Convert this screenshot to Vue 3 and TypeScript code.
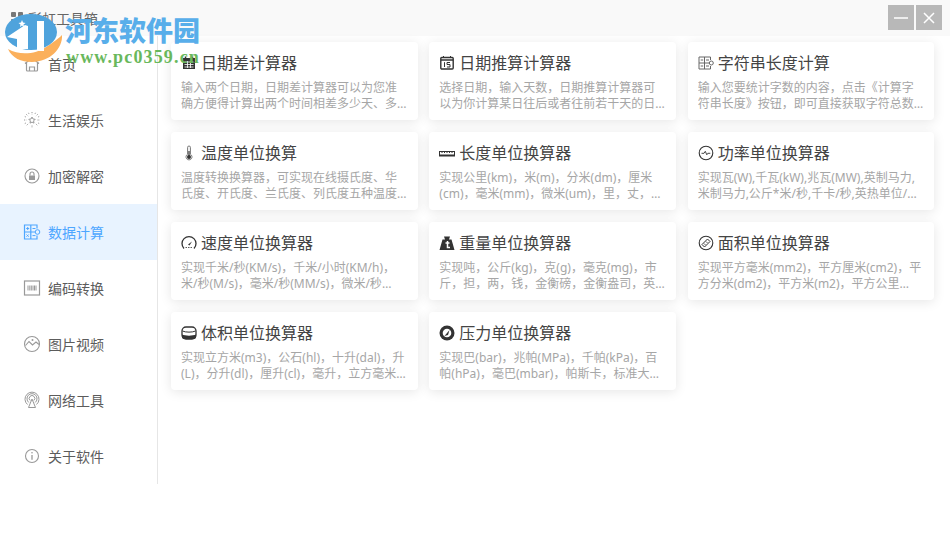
<template>
  <div class="app-window">
    <header class="title-bar">
      <div class="app-title">
        <svg class="app-logo" viewBox="0 0 12 12">
          <rect x="0" y="0" width="5" height="5" rx="1" />
          <rect x="7" y="0" width="5" height="5" rx="1" />
          <rect x="0" y="7" width="5" height="5" rx="1" />
          <rect x="7" y="7" width="5" height="5" rx="1" />
        </svg>
        <span>彩虹工具箱</span>
      </div>
      <div class="window-buttons">
        <button class="win-btn" aria-label="最小化">
          <svg viewBox="0 0 26 26"><path d="M6 13h14" /></svg>
        </button>
        <button class="win-btn" aria-label="关闭">
          <svg viewBox="0 0 26 26"><path d="M8 8l10 10M18 8L8 18" /></svg>
        </button>
      </div>
    </header>

    <div class="main">
      <nav class="sidebar">
        <div
          v-for="item in menu"
          :key="item.name"
          class="menu-item"
          :class="{ active: item.name === activeMenu }"
        >
          <svg class="menu-icon" viewBox="0 0 18 18" v-html="item.icon"></svg>
          <span>{{ item.name }}</span>
        </div>
      </nav>

      <section class="content">
        <article v-for="card in cards" :key="card.title" class="tool-card">
          <h3 class="card-title">
            <svg class="card-icon" viewBox="0 0 16 16" v-html="card.icon"></svg>
            <span>{{ card.title }}</span>
          </h3>
          <p class="card-desc">{{ card.desc }}</p>
        </article>
      </section>
    </div>

    <div class="watermark">
      <svg class="wm-logo" viewBox="0 0 66 70">
        <path d="M8 49C20 56 36 54 46 47C54 42 59 38 62 35C63 48 50 62 32 62C21 62 12 58 8 49Z" fill="#fbb05c" />
        <ellipse cx="31" cy="32" rx="26" ry="18" fill="#4fa3dc" />
        <path d="M7 37L25 25L28 26V49H17V39Z" fill="#fff" />
        <path d="M37 21H44V51H37Z" fill="#fff" />
        <path d="M22 20l1 2.500 2.500 0.500-2 1.500 0.500 2.500-2-1.500-2 1.500 0.500-2.500-2-1.500 2.500-0.500z" fill="#fff" />
      </svg>
      <div class="wm-name">河东软件园</div>
      <div class="wm-url">www.pc0359.cn</div>
    </div>
  </div>
</template>

<script setup lang="ts">
interface MenuItem {
  name: string
  icon: string
}

interface ToolCard {
  title: string
  desc: string
  icon: string
}

const activeMenu = '数据计算'

const menu: MenuItem[] = [
  {
    name: '首页',
    icon: '<path d="M2 8.500L9 3l7 5.500M3.500 7.500V15a1 1 0 0 0 1 1h9a1 1 0 0 0 1-1V7.500M6.500 16v-4h5v4" fill="none" stroke="currentColor" stroke-width="1.200"/>'
  },
  {
    name: '生活娱乐',
    icon: '<path d="M9 6l1 2 2.200.3-1.600 1.600.4 2.200-2-1-2 1 .4-2.200-1.600-1.600 2.200-.3z" fill="none" stroke="currentColor" stroke-width="1"/><path d="M9 1v2.500M9 14.500V17M1 9h2.500M14.500 9H17M3.300 3.300l1.800 1.800M12.900 12.900l1.800 1.800M14.700 3.300l-1.800 1.800M5.100 12.900l-1.800 1.800M5.500 1.800l.8 1.700M12.500 1.800l-.8 1.700M1.800 5.500l1.700.8M16.200 5.500l-1.700.8M1.800 12.500l1.700-.8M16.200 12.500l-1.700-.8" fill="none" stroke="currentColor" stroke-width="1" stroke-dasharray="1.200 1"/>'
  },
  {
    name: '加密解密',
    icon: '<circle cx="9" cy="9" r="7" fill="none" stroke="currentColor" stroke-width="1.100"/><rect x="6" y="8.500" width="6" height="4.500" fill="currentColor"/><path d="M7 8.500V7a2 2 0 0 1 4 0v1.500" fill="none" stroke="currentColor" stroke-width="1.100"/>'
  },
  {
    name: '数据计算',
    icon: '<path d="M14 5.500V2H1.500v14H14v-3.500M1.500 9h12.500M7.800 2v14" fill="none" stroke="currentColor" stroke-width="1.200"/><path d="M3.200 5.500h3M4.700 4v3M9.500 5.500h3M3.500 11.500l2.200 2.200M5.700 11.500l-2.200 2.200M9.500 12.600h3" fill="none" stroke="currentColor"/><circle cx="14.500" cy="9" r="2.300" fill="#e8f3ff" stroke="currentColor"/>'
  },
  {
    name: '编码转换',
    icon: '<rect x="1.500" y="2" width="15" height="14" fill="none" stroke="currentColor" stroke-width="1.200"/><path d="M5 6.500v5M6.800 6.500v5M8.300 6.500v5M10 6.500v5M11.500 6.500v5M13 6.500v5" stroke="currentColor" fill="none"/>'
  },
  {
    name: '图片视频',
    icon: '<circle cx="9" cy="9" r="7.500" fill="none" stroke="currentColor" stroke-width="1.100"/><path d="M2.500 10.500L6 6.500l3.500 3.500L13 7l3 2.500" fill="none" stroke="currentColor" stroke-width="1.100"/><circle cx="9.500" cy="5" r="1" fill="currentColor"/>'
  },
  {
    name: '网络工具',
    icon: '<g fill="none" stroke="currentColor" stroke-width="1"><path d="M4.500 13.500a7 7 0 1 1 9 0"/><path d="M5.800 11.500a5 5 0 1 1 6.400 0"/><path d="M7.200 9.500a2.800 2.800 0 1 1 3.600 0"/><path d="M9 8l-3.500 8.500h7z"/></g>'
  },
  {
    name: '关于软件',
    icon: '<circle cx="9" cy="9" r="6.500" fill="none" stroke="currentColor" stroke-width="1.100"/><path d="M9 8v4.800" stroke="currentColor" stroke-width="1.300"/><circle cx="9" cy="5.800" r="0.800" fill="currentColor"/>'
  }
]

const cards: ToolCard[] = [
  {
    title: '日期差计算器',
    desc: '输入两个日期，日期差计算器可以为您准确方便得计算出两个时间相差多少天、多少小时、多少分钟',
    icon: '<rect x="2" y="3" width="12" height="11" fill="currentColor"/><path d="M4.500 1.500v2M11.500 1.500v2" stroke="currentColor" stroke-width="1.500"/><path d="M3.500 7h9M3.500 9.500h9M3.500 12h9M6.500 6v7M9.500 6v7" stroke="#fff" stroke-width="0.800"/>'
  },
  {
    title: '日期推算计算器',
    desc: '选择日期，输入天数，日期推算计算器可以为你计算某日往后或者往前若干天的日期是什么时候',
    icon: '<rect x="1.800" y="2.500" width="12.400" height="11.500" rx="1" fill="none" stroke="currentColor" stroke-width="1.400"/><path d="M1.800 5h12.400" stroke="currentColor" stroke-width="1.500"/><path d="M4.500 1v2M11.500 1v2" stroke="currentColor"/><path d="M5.500 7.200v4.800M8 7.500h3M8 7.500v2h3v2.500H8" fill="none" stroke="currentColor"/>'
  },
  {
    title: '字符串长度计算',
    desc: '输入您要统计字数的内容，点击《计算字符串长度》按钮，即可直接获取字符总数和其它统计结果',
    icon: '<path d="M12.500 5V2H1v12h11.500v-3M1 8h11.500M6.500 2v12" fill="none" stroke="#666"/><path d="M2.700 5h2.500M8 5h3M2.700 11h2.500M8 11h3" stroke="#666"/><circle cx="13.300" cy="8" r="2" fill="#fff" stroke="#666"/>'
  },
  {
    title: '温度单位换算',
    desc: '温度转换换算器，可实现在线摄氏度、华氏度、开氏度、兰氏度、列氏度五种温度之间的互相转换',
    icon: '<path d="M6.500 2.500a1.500 1.500 0 0 1 3 0v6.800a3 3 0 1 1-3 0z" fill="#eee" stroke="#666" stroke-width="0.800"/><circle cx="8" cy="12" r="2" fill="currentColor"/><path d="M8 6v5" stroke="currentColor" stroke-width="1.200"/>'
  },
  {
    title: '长度单位换算器',
    desc: '实现公里(km)，米(m)，分米(dm)，厘米(cm)，毫米(mm)，微米(um)，里，丈，尺，寸，分，厘',
    icon: '<rect x="0.500" y="6.500" width="15" height="4.500" fill="none" stroke="currentColor" stroke-width="1"/><rect x="0.500" y="9.500" width="15" height="1.500" fill="currentColor"/><path d="M3 6.500v1.500M5.500 6.500v1.500M8 6.500v1.500M10.500 6.500v1.500M13 6.500v1.500" stroke="currentColor"/>'
  },
  {
    title: '功率单位换算器',
    desc: '实现瓦(W),千瓦(kW),兆瓦(MW),英制马力,米制马力,公斤*米/秒,千卡/秒,英热单位/秒,尔格/秒',
    icon: '<circle cx="8" cy="8" r="6.800" fill="none" stroke="currentColor" stroke-width="1.100"/><path d="M3.500 8.300h2.500l1.300-2 1.500 3.500 1-1.500h2.500" fill="none" stroke="currentColor" stroke-width="0.900"/>'
  },
  {
    title: '速度单位换算器',
    desc: '实现千米/秒(KM/s)，千米/小时(KM/h)，米/秒(M/s)，毫米/秒(MM/s)，微米/秒(um/s)，英里/小时',
    icon: '<path d="M3 13.500a7 7 0 1 1 10 0" fill="none" stroke="currentColor" stroke-width="1.300"/><path d="M7 9.500l4-3-2.500 4z" fill="currentColor"/><path d="M4.500 12.500h7" stroke="currentColor" stroke-width="0.800" stroke-dasharray="1.500 1"/>'
  },
  {
    title: '重量单位换算器',
    desc: '实现吨，公斤(kg)，克(g)，毫克(mg)，市斤，担，两，钱，金衡磅，金衡盎司，英钱，金衡格令',
    icon: '<path d="M5 1.500h6l-1 3h2.500L15.500 15H.5L3.500 4.500H6z" fill="currentColor"/><path d="M8.500 6v6.500h2.500M6.500 8h4" fill="none" stroke="#fff" stroke-width="1.500"/>'
  },
  {
    title: '面积单位换算器',
    desc: '实现平方毫米(mm2)，平方厘米(cm2)，平方分米(dm2)，平方米(m2)，平方公里(km2)，公顷，亩',
    icon: '<circle cx="8" cy="8" r="6.800" fill="none" stroke="currentColor" stroke-width="1.100"/><path d="M4 9.500L9.500 4 12 6.500 6.500 12z" fill="none" stroke="currentColor"/><path d="M6 8.500l1.500 1.500M8 6.500l1.500 1.500" stroke="currentColor" stroke-width="0.800"/>'
  },
  {
    title: '体积单位换算器',
    desc: '实现立方米(m3)，公石(hl)，十升(dal)，升(L)，分升(dl)，厘升(cl)，毫升，立方毫米(mm3)，立方厘米',
    icon: '<rect x="1" y="2" width="14" height="12" rx="4" fill="none" stroke="currentColor" stroke-width="1.300"/><path d="M1 9.500c3 1.500 11 1.500 14 0V12a3 2 0 0 1-3 2H4a3 2 0 0 1-3-2z" fill="currentColor"/><path d="M1.500 6c3 1.500 10 1.500 13 0" fill="none" stroke="currentColor"/>'
  },
  {
    title: '压力单位换算器',
    desc: '实现巴(bar)，兆帕(MPa)，千帕(kPa)，百帕(hPa)，毫巴(mbar)，帕斯卡，标准大气压，毫米汞柱',
    icon: '<circle cx="8" cy="8" r="7.500" fill="currentColor"/><circle cx="8" cy="8" r="4.300" fill="#fff"/><path d="M5.500 11L10.500 5 9 10z" fill="currentColor"/>'
  }
]
</script>

<style scoped>
.app-window {
  position: relative;
  width: 950px;
  height: 550px;
  overflow: hidden;
  background: #fff;
  font-family: "Noto Sans", "Noto Sans CJK SC", sans-serif;
}

.title-bar {
  height: 36px;
  display: flex;
  align-items: center;
  justify-content: space-between;
  background: #f9f9f9;
  padding: 0 8px 0 11px;
}

.app-title {
  display: flex;
  align-items: center;
  gap: 5px;
  font-size: 14px;
  color: #666;
}

.app-logo {
  width: 12px;
  height: 12px;
  fill: #777;
}

.window-buttons {
  display: flex;
  gap: 2px;
  margin-top: -1px;
}

.win-btn {
  width: 26px;
  height: 25px;
  padding: 0;
  border: none;
  background: #b8b8b8;
  display: flex;
  align-items: center;
  justify-content: center;
}

.win-btn svg {
  width: 26px;
  height: 26px;
  fill: none;
  stroke: #fff;
  stroke-width: 1.500;
}

.main {
  display: flex;
  align-items: flex-start;
}

.sidebar {
  width: 157px;
  flex-shrink: 0;
  border-right: 1px solid #e6e6e6;
}

.menu-item {
  height: 56px;
  display: flex;
  align-items: center;
  gap: 7px;
  padding-left: 23px;
  font-size: 14px;
  color: #5c5c5c;
}

.menu-item .menu-icon {
  color: #999;
}

.menu-item.active {
  background: #e8f3ff;
  color: #4da6ff;
}

.menu-item.active .menu-icon {
  color: #4da6ff;
}

.menu-icon {
  width: 18px;
  height: 18px;
  flex-shrink: 0;
}

.content {
  flex: 1;
  display: grid;
  grid-template-columns: repeat(3, 246.670px);
  column-gap: 11.670px;
  row-gap: 12px;
  padding: 6px 0 0 13px;
}

.tool-card {
  height: 78px;
  box-sizing: border-box;
  padding: 9px 9px 0 10px;
  background: #fff;
  border-radius: 4px;
  box-shadow: 0 2px 12px rgba(0, 0, 0, 0.1);
}

.card-title {
  margin: 0 0 5px;
  display: flex;
  align-items: center;
  gap: 4px;
  font-size: 16px;
  font-weight: 400;
  line-height: 24px;
  color: #444;
}

.card-icon {
  width: 16px;
  height: 16px;
  flex-shrink: 0;
  color: #333;
}

.card-desc {
  margin: 0;
  font-size: 12px;
  line-height: 16px;
  color: #a6a6a6;
  display: -webkit-box;
  -webkit-box-orient: vertical;
  -webkit-line-clamp: 2;
  overflow: hidden;
}

.watermark {
  position: absolute;
  left: 0;
  top: 0;
  width: 210px;
  height: 70px;
  pointer-events: none;
}

.wm-logo {
  position: absolute;
  left: 0;
  top: 0;
  width: 66px;
  height: 70px;
}

.wm-name {
  position: absolute;
  left: 65px;
  top: 12px;
  font-family: "Noto Sans CJK SC", sans-serif;
  font-size: 27px;
  line-height: 36px;
  font-weight: 900;
  color: #58aeea;
  white-space: nowrap;
}

.wm-url {
  position: absolute;
  left: 66px;
  top: 47px;
  font-family: "Liberation Serif", serif;
  font-size: 18px;
  line-height: 20px;
  font-weight: 700;
  letter-spacing: 1.150px;
  color: #69b85c;
  white-space: nowrap;
}
</style>
